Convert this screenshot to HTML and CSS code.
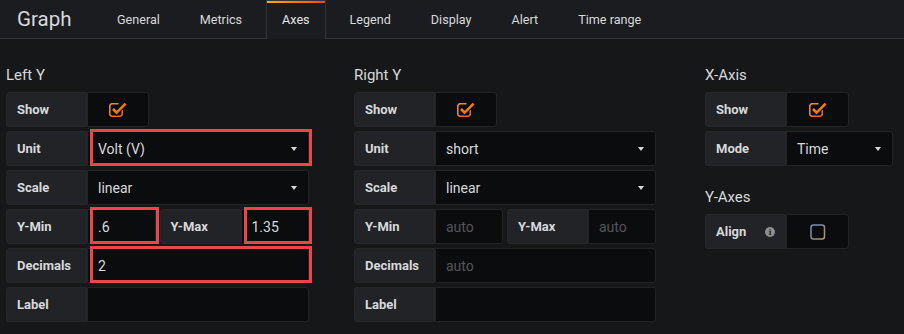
FILE: index.html
```html
<!DOCTYPE html>
<html>
<head>
<meta charset="utf-8">
<link rel="stylesheet" href="styles.css">
</head>
<body>
<div class="header">
  <div class="title">Graph</div>
  <ul class="tabs">
    <li class="tab">General</li>
    <li class="tab">Metrics</li>
    <li class="tab active">Axes</li>
    <li class="tab">Legend</li>
    <li class="tab">Display</li>
    <li class="tab">Alert</li>
    <li class="tab">Time range</li>
  </ul>
</div>
<div class="content">
  <section class="group group-left">
    <h5 class="heading">Left Y</h5>
    <div class="row">
      <div class="lbl">Show</div>
      <div class="inp check"><svg class="cb" width="18" height="16" viewBox="0 0 18 16"><defs><linearGradient id="og1" x1="0" y1="0" x2="1" y2="1"><stop offset="0" stop-color="#f7931e"/><stop offset="1" stop-color="#e8620f"/></linearGradient></defs><path d="M9.5 1.8H3a2.2 2.2 0 0 0-2.2 2.2v8a2.2 2.2 0 0 0 2.2 2.2h8a2.2 2.2 0 0 0 2.2-2.2V8" fill="none" stroke="url(#og1)" stroke-width="1.6"/><path d="M4 7l3.6 3.6L16.6 1.6" fill="none" stroke="#0b0c0e" stroke-width="4.4"/><path d="M4 7l3.6 3.6L16.6 1.6" fill="none" stroke="url(#og1)" stroke-width="2.6"/></svg></div>
    </div>
    <div class="row">
      <div class="lbl">Unit</div>
      <div class="inp grow hl">Volt (V)<span class="caret"></span></div>
    </div>
    <div class="row">
      <div class="lbl">Scale</div>
      <div class="inp grow">linear<span class="caret"></span></div>
    </div>
    <div class="row">
      <div class="half">
        <div class="lbl">Y-Min</div>
        <div class="inp grow hl">.6</div>
      </div>
      <div class="half">
        <div class="lbl">Y-Max</div>
        <div class="inp grow hl">1.35</div>
      </div>
    </div>
    <div class="row">
      <div class="lbl">Decimals</div>
      <div class="inp grow hl">2</div>
    </div>
    <div class="row">
      <div class="lbl">Label</div>
      <div class="inp grow"></div>
    </div>
  </section>

  <section class="group group-right">
    <h5 class="heading">Right Y</h5>
    <div class="row">
      <div class="lbl">Show</div>
      <div class="inp check"><svg class="cb" width="18" height="16" viewBox="0 0 18 16"><defs><linearGradient id="og2" x1="0" y1="0" x2="1" y2="1"><stop offset="0" stop-color="#f7931e"/><stop offset="1" stop-color="#e8620f"/></linearGradient></defs><path d="M9.5 1.8H3a2.2 2.2 0 0 0-2.2 2.2v8a2.2 2.2 0 0 0 2.2 2.2h8a2.2 2.2 0 0 0 2.2-2.2V8" fill="none" stroke="url(#og2)" stroke-width="1.6"/><path d="M4 7l3.6 3.6L16.6 1.6" fill="none" stroke="#0b0c0e" stroke-width="4.4"/><path d="M4 7l3.6 3.6L16.6 1.6" fill="none" stroke="url(#og2)" stroke-width="2.6"/></svg></div>
    </div>
    <div class="row">
      <div class="lbl">Unit</div>
      <div class="inp grow">short<span class="caret"></span></div>
    </div>
    <div class="row">
      <div class="lbl">Scale</div>
      <div class="inp grow">linear<span class="caret"></span></div>
    </div>
    <div class="row">
      <div class="half">
        <div class="lbl">Y-Min</div>
        <div class="inp grow placeholder">auto</div>
      </div>
      <div class="half">
        <div class="lbl">Y-Max</div>
        <div class="inp grow placeholder">auto</div>
      </div>
    </div>
    <div class="row">
      <div class="lbl">Decimals</div>
      <div class="inp grow placeholder">auto</div>
    </div>
    <div class="row">
      <div class="lbl">Label</div>
      <div class="inp grow"></div>
    </div>
  </section>

  <section class="group group-x">
    <h5 class="heading">X-Axis</h5>
    <div class="row">
      <div class="lbl">Show</div>
      <div class="inp check"><svg class="cb" width="18" height="16" viewBox="0 0 18 16"><defs><linearGradient id="og3" x1="0" y1="0" x2="1" y2="1"><stop offset="0" stop-color="#f7931e"/><stop offset="1" stop-color="#e8620f"/></linearGradient></defs><path d="M9.5 1.8H3a2.2 2.2 0 0 0-2.2 2.2v8a2.2 2.2 0 0 0 2.2 2.2h8a2.2 2.2 0 0 0 2.2-2.2V8" fill="none" stroke="url(#og3)" stroke-width="1.6"/><path d="M4 7l3.6 3.6L16.6 1.6" fill="none" stroke="#0b0c0e" stroke-width="4.4"/><path d="M4 7l3.6 3.6L16.6 1.6" fill="none" stroke="url(#og3)" stroke-width="2.6"/></svg></div>
    </div>
    <div class="row">
      <div class="lbl">Mode</div>
      <div class="inp mode">Time<span class="caret"></span></div>
    </div>

    <h5 class="heading heading-sub">Y-Axes</h5>
    <div class="row">
      <div class="lbl lbl-info">Align<span class="info">i</span></div>
      <div class="inp check"><svg width="16" height="16" viewBox="0 0 16 16"><defs><linearGradient id="gb" x1="0" y1="0" x2="1" y2="1"><stop offset="0" stop-color="#6f95b8"/><stop offset="0.5" stop-color="#8a8a8a"/><stop offset="1" stop-color="#b49a6a"/></linearGradient></defs><rect x="1" y="1" width="13.5" height="14" rx="2.5" fill="none" stroke="url(#gb)" stroke-width="1.5"/></svg></div>
    </div>
  </section>
</div>
</body>
</html>
```
FILE: styles.css
```css
* { box-sizing: border-box; }
html, body {
  margin: 0;
  padding: 0;
  background: #161719;
  color: #d8d9da;
  font-family: Roboto, "Liberation Sans", sans-serif;
}
.header {
  display: flex;
  height: 39px;
  background: #1b1c1f;
  border-bottom: 1px solid #333336;
}
.title {
  width: 101px;
  padding-left: 17px;
  font-size: 20.5px;
  line-height: 38px;
  color: #d8d9da;
}
.tabs {
  display: flex;
  margin: 0;
  padding: 0;
  list-style: none;
}
.tab {
  padding: 0 15px;
  margin-right: 8px;
  border: 1px solid transparent;
  border-bottom: 0;
  font-size: 12.6px;
  line-height: 38px;
  color: #d8d9da;
}
.tab.active {
  border-color: #333336;
  height: 39px;
  background: linear-gradient(90deg, #ffb000, #ff4a00) top / 100% 2px no-repeat, #1b1c1f;
  color: #e6e6e6;
}
.content {
  display: flex;
  align-items: flex-start;
  padding: 27px 0 0 6px;
}
.group-left { width: 303px; margin-right: 45px; }
.group-right { width: 302px; margin-right: 49px; }
.group-x { width: 190px; }
.heading {
  margin: 0 0 8px;
  font-size: 15px;
  line-height: 18px;
  font-weight: 400;
  color: #d8d9da;
}
.heading-sub { margin-top: 22px; }
.row {
  display: flex;
  height: 35px;
  margin-bottom: 4px;
}
.half {
  display: flex;
  flex: 1;
}
.half + .half { margin-left: 4px; }
.lbl {
  display: flex;
  align-items: center;
  width: 81px;
  flex: none;
  padding: 0 10px;
  background: #212327;
  border: 1px solid #26272a;
  border-radius: 3px 0 0 3px;
  font-size: 13px;
  font-weight: 700;
  color: #d8d9da;
}
.lbl-info { justify-content: space-between; }
.info {
  display: inline-flex;
  align-items: center;
  justify-content: center;
  width: 10px;
  height: 10px;
  border-radius: 50%;
  background: #8e8e8e;
  color: #212327;
  font-size: 8px;
  font-weight: 700;
  font-family: "DejaVu Serif", serif;
}
.inp {
  display: flex;
  align-items: center;
  padding: 0 10px;
  background: #0b0c0e;
  border: 1px solid #222326;
  border-radius: 0 3px 3px 0;
  font-size: 14px;
  color: #d8d9da;
}
.grow { flex: 1; min-width: 0; }
.check {
  width: 62px;
  justify-content: center;
  padding: 0;
}
.group-x .check { width: 63px; }
.mode { width: 107px; }
.placeholder { color: #55565a; }
.caret {
  margin-left: auto;
  margin-right: 1px;
  width: 0;
  height: 0;
  border-left: 3.5px solid transparent;
  border-right: 3.5px solid transparent;
  border-top: 4px solid #d8d9da;
}
.hl { position: relative; }
.hl::after {
  content: "";
  position: absolute;
  top: -3px;
  bottom: -1px;
  left: 2px;
  right: -4px;
  border: 3px solid #f0434a;
}
```
